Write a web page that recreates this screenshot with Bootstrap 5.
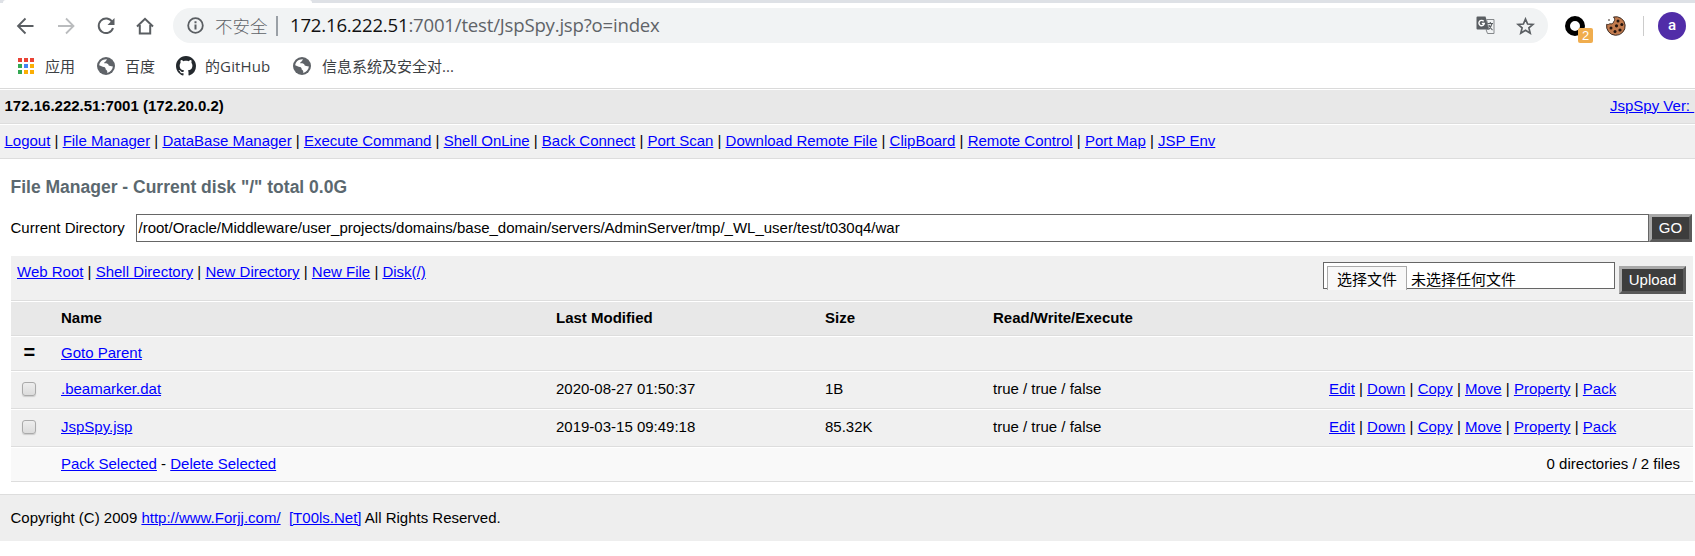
<!DOCTYPE html>
<html lang="zh-CN">
<head>
<meta charset="utf-8">
<title>JspSpy</title>
<link href="https://cdn.jsdelivr.net/npm/bootstrap@5.3.0/dist/css/bootstrap.min.css" rel="stylesheet">
<style>
body{font:15px/20px "Liberation Sans","Noto Sans CJK SC",sans-serif;color:#000;background:#fff;overflow:hidden}
a{color:#00f;text-decoration:underline;text-underline-offset:1px}
svg{display:block;flex:none}
.chrome{height:89px;border-bottom:1px solid #dadada;font-family:"Open Sans","Noto Sans CJK SC",sans-serif;color:#3c4043}
.tabstrip{height:3px;background:#dee1e6}
.tab-active{width:309px;margin-left:3px;height:3px;background:#fff;border-radius:3px 3px 0 0}
.toolbar{height:45px;padding-left:16px;padding-right:9px}
.omnibox{height:35px;width:1375px;border-radius:18px;background:#f1f3f4;padding-left:14px;padding-right:13px;margin-left:18px}
.unsafe{font-size:17.5px;font-weight:300;color:#5f6368;width:52px;margin-left:11px;white-space:nowrap}
.bar{width:2px;height:20px;background:#9aa0a6;margin:0 12px 0 9px}
.url{font-size:18.6px;letter-spacing:-.2px;color:#5f6368;white-space:nowrap;position:relative;top:-1px}
.url b{font-weight:400;color:#111}
.bookmarks{height:36px;font-size:15px;padding-left:17px}
.bookmarks span{white-space:nowrap}
.count{position:absolute;left:13px;top:12px;width:15px;height:15px;border-radius:2px;background:#f0ad4e;color:#fff;font:13px/16px "Liberation Sans",sans-serif;text-align:center}
.avatar{width:28px;height:28px;border-radius:50%;background:#512da8;color:#fff;font:500 15px/27px Roboto,sans-serif;text-align:center}
.strip{height:35px;border-top:1px solid #fff;border-bottom:1px solid #ddd;padding:0 5px 2px 4.5px;background:#f0f0f0;white-space:nowrap}
.strip.top{background:#e8e8e8;font-weight:700}
.ver{font-weight:400;width:80px;overflow:visible}
h2{font-size:17.5px;line-height:22px;font-weight:700;color:#5b686f;margin:17px 0 0 10.5px}
.dir{margin:16px 3px 0 10.500px;height:28px}
.dirbox{height:28px;border:1px solid #666;padding:0 2px;line-height:26px;white-space:nowrap}
.btn3d{border:3px solid;border-color:#a9a9a9 #5a5a5a #5a5a5a #a9a9a9;background:#3d3d3d;color:#fff;height:28px;padding:0;line-height:20px;text-align:center;border-radius:0;font-size:15px}
.files{width:1682px;margin:14px 0 0 11px;table-layout:fixed;border-collapse:separate;border-spacing:0}
.files td,.files th{height:35px;padding:0 0 2px;border-top:1px solid #fff;border-bottom:1px solid #ddd;background:#f0f0f0;vertical-align:middle;white-space:nowrap}
.files th{background:#e8e8e8}
.files tr.tools td{height:45px;border-top:0;vertical-align:top;padding:0}
.files tr.item td{height:38px}
.files tr.sum td{background:#f9f9f9}
.filebox{width:292px;height:27px;border:1px solid #666;background:#fff;padding:3px 0 0 3px;margin-top:6px}
.choose{width:80px;height:24px;border:1px solid #aaa;border-bottom:0;background:#f8f8f8;text-align:center;line-height:26px;flex:none}
.box{width:14px;height:14px;border:1px solid #aaa;border-radius:3px;background:linear-gradient(#eee,#dcdcdc);margin-left:11px;box-shadow:0 1px 1px #ccc}
.parent{display:block;height:20px;font:bold 20px/18px "Liberation Sans",sans-serif;margin-left:12.500px}
.foot{margin-top:12px;height:47px;border-top:1px solid #ddd;background:#eee;padding:0 10.500px}
</style>
<script src="https://cdn.jsdelivr.net/npm/bootstrap@5.3.0/dist/js/bootstrap.bundle.min.js"></script>
</head>
<body>
<header class="chrome">
  <div class="tabstrip"><div class="tab-active"></div></div>
  <div class="toolbar d-flex align-items-center">
    <svg width="19" height="18" viewBox="0 0 19 18" fill="none" stroke="#5a5e62" stroke-width="1.800"><path d="M17.500 9H2.500M9.500 1.500L2 9l7.500 7.500"/></svg>
    <svg style="margin-left:22px" width="19" height="18" viewBox="0 0 19 18" fill="none" stroke="#babcbe" stroke-width="1.800"><path d="M1 9h15M9 1.500L16.500 9 9 16.500"/></svg>
    <svg style="margin-left:21px" width="18" height="18" viewBox="0 0 18 18" fill="none" stroke="#5a5e62" stroke-width="2"><path d="M15.300 5A7.300 7.300 0 1 0 16 11"/><path d="M17.500 1v7h-7z" fill="#5a5e62" stroke="none"/></svg>
    <svg style="margin-left:21px" width="18" height="18" viewBox="0 0 18 18" fill="none" stroke="#5a5e62" stroke-width="2"><path d="M1 9.500L9 1.800l8 7.700M3.800 8v8.500h10.400V8"/></svg>
    <div class="omnibox d-flex align-items-center" style="margin-left:19px">
      <svg width="17" height="17" viewBox="0 0 17 17"><circle cx="8.500" cy="8.500" r="7.300" fill="none" stroke="#5a5e62" stroke-width="1.800"/><path d="M7.500 4.300h2v2h-2zM7.500 7.500h2v5h-2z" fill="#5a5e62"/></svg>
      <span class="unsafe">不安全</span><span class="bar"></span>
      <span class="url"><b>172.16.222.51</b>:7001/test/JspSpy.jsp?o=index</span>
      <svg class="ms-auto" width="19" height="19" viewBox="0 0 19 19"><path d="M1.500.5h8l4 13h-12a1 1 0 0 1-1-1v-11a1 1 0 0 1 1-1z" fill="#5a5e62"/><path d="M10.500 3.500H18v14h-6.500l-1.500-4h3z" fill="#f1f3f4" stroke="#85888b"/><path d="M11.500 7.500h5.500M14.300 6v1.500M16 7.500c-1 3.500-2 4.500-3 5.500M13 9c1 2.500 2 4 3.500 5" fill="none" stroke="#5a5e62" stroke-width="1.100"/><path d="M7.700 5.300A2.700 2.700 0 1 0 8.300 7.500H5.800" fill="none" stroke="#fff" stroke-width="1.400"/></svg>
      <svg style="margin-left:21px" width="19" height="18" viewBox="0 0 19 18"><path d="M9.500 2l2.100 5 5.400.4-4.100 3.500 1.300 5.300-4.700-2.900-4.700 2.900 1.300-5.300L2 7.400 7.400 7z" fill="none" stroke="#5a5e62" stroke-width="1.700"/></svg>
    </div>
    <div class="position-relative" style="margin-left:17px">
      <svg width="20" height="20" viewBox="0 0 20 20"><circle cx="10" cy="10" r="7.500" fill="none" stroke="#000" stroke-width="5"/></svg>
      <span class="count">2</span>
    </div>
    <svg style="margin-left:21px" width="20" height="20" viewBox="0 0 20 20"><path d="M7.500 1A9.300 9.300 0 1 1 .7 8.300C2 8.700 3 8.500 3.800 7.700c1.800.8 3.500-.2 3.900-2C9 4.500 9 2.500 7.500 1z" fill="#c17a4d" stroke="#3d2a20" stroke-width="1"/><g fill="#24150f"><circle cx="12" cy="5" r="1.500"/><circle cx="15.800" cy="8.500" r="1.500"/><circle cx="10.500" cy="9.800" r="1.600"/><circle cx="5" cy="12" r="1.500"/><circle cx="9" cy="15.500" r="1.500"/><circle cx="14" cy="14" r="1.600"/><circle cx="3" cy="4" r=".8"/></g></svg>
    <div style="width:1px;height:20px;background:#ccc;margin-left:17px"></div>
    <div class="avatar ms-auto">a</div>
  </div>
  <div class="bookmarks d-flex align-items-center">
    <svg width="18" height="18" viewBox="0 0 18 18"><path d="M1 1h4v4H1zM7 1h4v4H7zM13 1h4v4h-4z" fill="#ea4335"/><path d="M1 7h4v4H1zM1 13h4v4H1z" fill="#34a853"/><path d="M7 7h4v4H7z" fill="#4285f4"/><path d="M13 7h4v4h-4zM7 13h4v4H7zM13 13h4v4h-4z" fill="#fbae05"/></svg>
    <span style="margin-left:10px;width:30px">应用</span>
    <svg style="margin-left:22px" width="18" height="18" viewBox="0 0 18 18"><circle cx="9" cy="9" r="9" fill="#5f6368"/><path d="M10 2.200c-1 1-.4 1.700-1.500 2.200-1.200.6-1.400 1-1 2 1.800-.2 3.800.3 4.200 2 .8.700 2.200.2 4.200 1.200-.4 3-2.500 5.500-5.700 6.300.4-1.400-.2-2.600-1.500-3.300.2-2.400-1.500-2.800-3-2.900L2.200 8.300C2.500 4.800 5.500 1.900 10 2.200z" fill="#fff"/></svg>
    <span style="margin-left:10px;width:30px">百度</span>
    <svg style="margin-left:21px" width="20" height="20" viewBox="0 0 16 16"><path fill="#24292e" d="M8 0C3.580 0 0 3.580 0 8c0 3.540 2.290 6.530 5.470 7.590.4.070.55-.17.55-.38 0-.19-.01-.82-.01-1.490-2.010.37-2.530-.49-2.690-.94-.09-.23-.48-.94-.82-1.130-.28-.15-.68-.52-.01-.53.63-.01 1.080.58 1.230.82.72 1.210 1.870.87 2.330.66.070-.52.28-.87.510-1.070-1.780-.2-3.640-.89-3.640-3.950 0-.87.31-1.590.82-2.150-.08-.2-.36-1.020.08-2.120 0 0 .67-.21 2.200.82.64-.18 1.320-.27 2-.27s1.360.09 2 .27c1.530-1.040 2.200-.82 2.200-.82.44 1.100.16 1.920.08 2.120.51.56.82 1.270.82 2.150 0 3.070-1.870 3.750-3.650 3.950.29.25.54.73.54 1.480 0 1.070-.01 1.930-.01 2.200 0 .21.15.46.55.38A8.010 8.010 0 0 0 16 8c0-4.420-3.580-8-8-8z"/></svg>
    <span style="margin-left:9px;width:66px;letter-spacing:.12px">的GitHub</span>
    <svg style="margin-left:22px" width="18" height="18" viewBox="0 0 18 18"><circle cx="9" cy="9" r="9" fill="#5f6368"/><path d="M10 2.200c-1 1-.4 1.700-1.500 2.200-1.200.6-1.400 1-1 2 1.800-.2 3.800.3 4.200 2 .8.700 2.200.2 4.200 1.200-.4 3-2.500 5.500-5.700 6.300.4-1.400-.2-2.600-1.500-3.300.2-2.400-1.500-2.800-3-2.900L2.200 8.300C2.500 4.800 5.500 1.900 10 2.200z" fill="#fff"/></svg>
    <span style="margin-left:11px">信息系统及安全对...</span>
  </div>
</header>
<div class="strip top d-flex align-items-center justify-content-between"><span>172.16.222.51:7001 (172.20.0.2)</span><a class="ver" href="#">JspSpy Ver:&nbsp;</a></div>
<nav class="strip d-flex align-items-center"><div><a href="#">Logout</a> | <a href="#">File Manager</a> | <a href="#">DataBase Manager</a> | <a href="#">Execute Command</a> | <a href="#">Shell OnLine</a> | <a href="#">Back Connect</a> | <a href="#">Port Scan</a> | <a href="#">Download Remote File</a> | <a href="#">ClipBoard</a> | <a href="#">Remote Control</a> | <a href="#">Port Map</a> | <a href="#">JSP Env</a></div></nav>
<main>
  <h2>File Manager - Current disk "/" total 0.0G</h2>
  <div class="dir d-flex align-items-center">
    <span style="width:125px">Current Directory</span>
    <div class="dirbox flex-grow-1">/root/Oracle/Middleware/user_projects/domains/base_domain/servers/AdminServer/tmp/_WL_user/test/t030q4/war</div>
    <button class="btn3d" style="width:43px">GO</button>
  </div>
  <table class="files">
    <colgroup><col style="width:50px"><col style="width:495px"><col style="width:269px"><col style="width:168px"><col style="width:336px"><col></colgroup>
    <tr class="tools"><td colspan="6"><div class="d-flex justify-content-between">
      <div style="padding:6px 0 0 6px"><a href="#">Web Root</a> | <a href="#">Shell Directory</a> | <a href="#">New Directory</a> | <a href="#">New File</a> | <a href="#">Disk(/)</a></div>
      <div class="d-flex" style="padding-right:7px"><div class="filebox d-flex"><span class="choose">选择文件</span><span style="margin:4px 0 0 4px">未选择任何文件</span></div><button class="btn3d" style="width:67px;margin:10px 0 0 4px">Upload</button></div>
    </div></td></tr>
    <tr><th></th><th>Name</th><th>Last Modified</th><th>Size</th><th>Read/Write/Execute</th><th></th></tr>
    <tr><td><span class="parent">=</span></td><td colspan="5"><a href="#">Goto Parent</a></td></tr>
    <tr class="item"><td><div class="box"></div></td><td><a href="#">.beamarker.dat</a></td><td>2020-08-27 01:50:37</td><td>1B</td><td>true / true / false</td><td><a href="#">Edit</a> | <a href="#">Down</a> | <a href="#">Copy</a> | <a href="#">Move</a> | <a href="#">Property</a> | <a href="#">Pack</a></td></tr>
    <tr class="item"><td><div class="box"></div></td><td><a href="#">JspSpy.jsp</a></td><td>2019-03-15 09:49:18</td><td>85.32K</td><td>true / true / false</td><td><a href="#">Edit</a> | <a href="#">Down</a> | <a href="#">Copy</a> | <a href="#">Move</a> | <a href="#">Property</a> | <a href="#">Pack</a></td></tr>
    <tr class="sum"><td></td><td colspan="4"><a href="#">Pack Selected</a> - <a href="#">Delete Selected</a></td><td class="text-end" style="padding-right:13px">0 directories / 2 files</td></tr>
  </table>
</main>
<footer class="foot d-flex align-items-center"><div>Copyright (C) 2009 <a href="#">http://www.Forjj.com/</a>&nbsp; <a href="#">[T00ls.Net]</a> All Rights Reserved.</div></footer>
</body>
</html>
